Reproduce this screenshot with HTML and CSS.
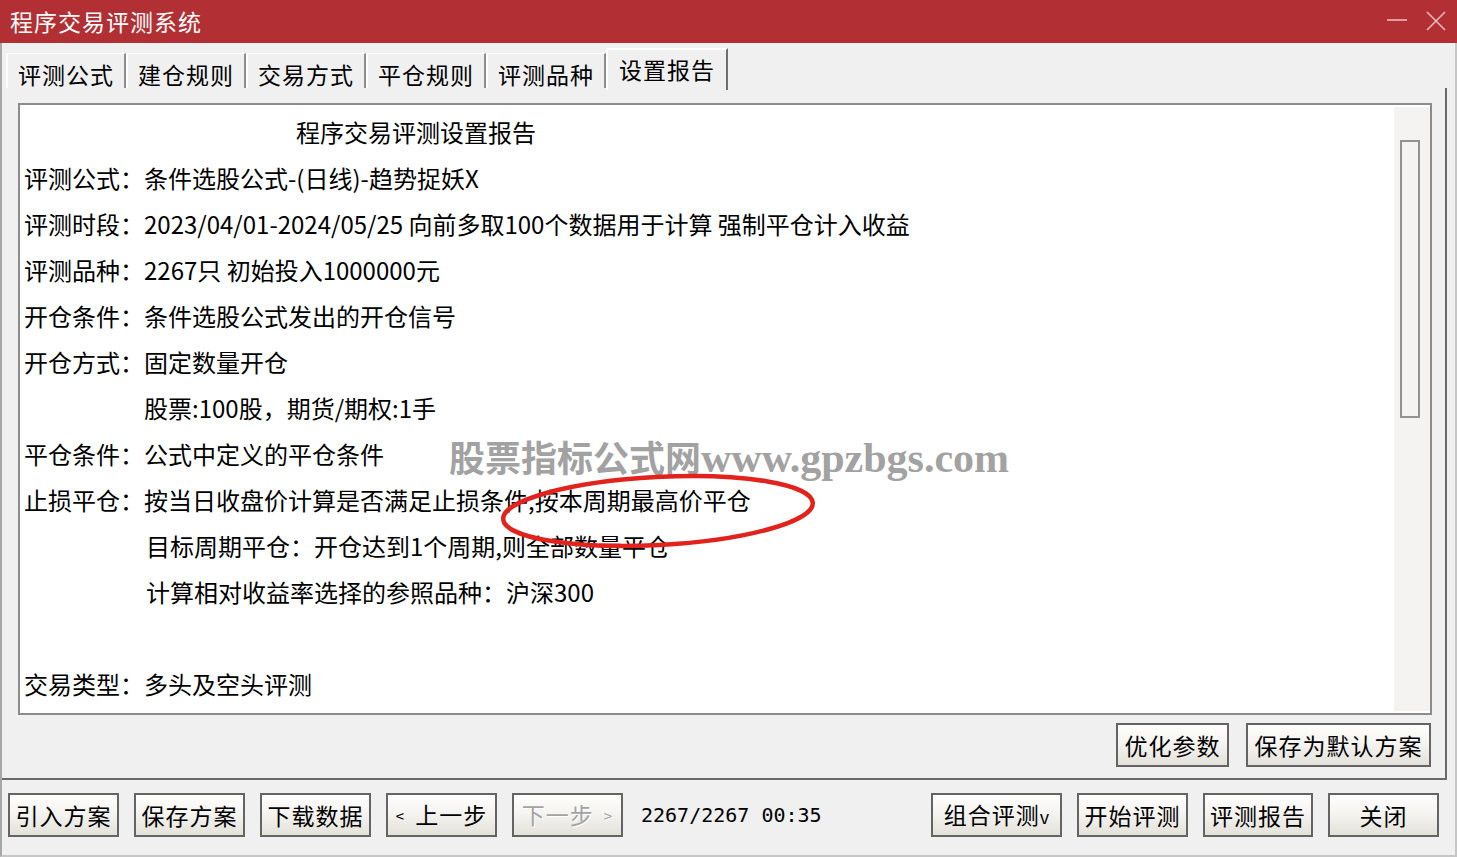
FILE: index.html
```html
<!DOCTYPE html>
<html lang="zh-CN">
<head>
<meta charset="utf-8">
<title>程序交易评测系统</title>
<link rel="stylesheet" href="styles.css">
</head>
<body>
<div class="window">
  <header class="titlebar">
    <span class="title">程序交易评测系统</span>
    <div class="controls">
      <svg class="ctl-min" width="22" height="6" viewBox="0 0 22 6"><line x1="1" y1="3" x2="21" y2="3" stroke="#f2c0c2" stroke-width="1.5"/></svg>
      <svg class="ctl-close" width="20" height="20" viewBox="0 0 20 20"><path d="M1 1 L19 19 M19 1 L1 19" stroke="#f2c0c2" stroke-width="1.5" fill="none"/></svg>
    </div>
  </header>
  <div class="body">
    <nav class="tabs">
      <div class="tab">评测公式</div>
      <div class="tab">建仓规则</div>
      <div class="tab">交易方式</div>
      <div class="tab">平仓规则</div>
      <div class="tab">评测品种</div>
      <div class="tab active">设置报告</div>
    </nav>
    <section class="page">
      <div class="report">
        <div class="report-text">
          <div class="line heading">程序交易评测设置报告</div>
          <div class="line"><span class="label">评测公式：</span>条件选股公式-(日线)-趋势捉妖X</div>
          <div class="line"><span class="label">评测时段：</span>2023/04/01-2024/05/25 向前多取100个数据用于计算 强制平仓计入收益</div>
          <div class="line"><span class="label">评测品种：</span>2267只 初始投入1000000元</div>
          <div class="line"><span class="label">开仓条件：</span>条件选股公式发出的开仓信号</div>
          <div class="line"><span class="label">开仓方式：</span>固定数量开仓</div>
          <div class="line indent">股票:100股，期货/期权:1手</div>
          <div class="line"><span class="label">平仓条件：</span>公式中定义的平仓条件</div>
          <div class="line"><span class="label">止损平仓：</span>按当日收盘价计算是否满足止损条件,按本周期最高价平仓</div>
          <div class="line indent2">目标周期平仓：开仓达到1个周期,则全部数量平仓</div>
          <div class="line indent2">计算相对收益率选择的参照品种：沪深300</div>
          <div class="line"></div>
          <div class="line"><span class="label">交易类型：</span>多头及空头评测</div>
        </div>
        <div class="scroll"><div class="thumb"></div></div>
        <div class="watermark">股票指标公式网<span class="wm-latin">www.gpzbgs.com</span></div>
        <svg class="mark" width="320" height="80" viewBox="0 0 320 80">
          <ellipse cx="161" cy="40" rx="155" ry="34" transform="rotate(-3 161 40)" fill="none" stroke="#e2221c" stroke-width="4.5"/>
        </svg>
      </div>
      <div class="page-actions">
        <button class="btn w113">优化参数</button>
        <button class="btn w185">保存为默认方案</button>
      </div>
    </section>
    <footer class="bottombar">
      <div class="group">
        <button class="btn">引入方案</button>
        <button class="btn">保存方案</button>
        <button class="btn">下载数据</button>
        <button class="btn"><span class="arrow">&lt;</span>上一步</button>
        <button class="btn disabled">下一步<span class="arrow r">&gt;</span></button>
        <span class="status">2267/2267 00:35</span>
      </div>
      <div class="group">
        <button class="btn w131">组合评测<span class="small-v">v</span></button>
        <button class="btn">开始评测</button>
        <button class="btn w110">评测报告</button>
        <button class="btn">关闭</button>
      </div>
    </footer>
  </div>
</div>
</body>
</html>
```

FILE: styles.css
```css
* { box-sizing: border-box; }
html, body { margin: 0; padding: 0; }
body {
  background: #f0f0f0;
  font-family: "Noto Sans CJK SC", "Noto Sans", sans-serif;
  color: #000;
}
.window {
  width: 1457px;
  height: 857px;
  display: flex;
  flex-direction: column;
  overflow: hidden;
}
.titlebar {
  height: 43px;
  flex: none;
  background: #b22f34;
  display: flex;
  align-items: center;
  padding: 0 10px 0 10px;
}
.title {
  color: #fff;
  font-size: 23px;
  line-height: 43px;
  letter-spacing: 1px;
}
.controls {
  margin-left: auto;
  display: flex;
  align-items: center;
  gap: 18px;
  padding-right: 1px;
}
.ctl-min { margin-top: -4px; }
.ctl-close { margin-top: -2px; }

.body {
  flex: 1;
  display: flex;
  flex-direction: column;
  border-left: 2px solid #a8a8a8;
  border-right: 2px solid #c6c6c6;
  border-bottom: 2px solid #c6c6c6;
}
.tabs {
  height: 45px;
  flex: none;
  display: flex;
  align-items: flex-end;
  padding-left: 4px;
}
.tab {
  width: 120px;
  height: 35px;
  font-size: 23px;
  letter-spacing: 1px;
  line-height: 36px;
  text-align: center;
  border-top: 1px solid #fcfcfc;
  border-left: 2px solid #fcfcfc;
  border-right: 2px solid #8e8e8e;
  padding-top: 2px;
}
.tab.active {
  width: 122px;
  height: 42px;
  margin-bottom: -2px;
  padding-top: 0;
  line-height: 38px;
  border-top: 2px solid #fcfcfc;
  border-right: 2px solid #6e6e6e;
  background: #f0f0f0;
  position: relative;
  z-index: 1;
}

.page {
  height: 692px;
  flex: none;
  margin-right: 8px;
  border-right: 2px solid #6a6a6a;
  border-bottom: 2px solid #6a6a6a;
  padding: 15px 13px 11px 16px;
  display: flex;
  flex-direction: column;
}
.report {
  height: 612px;
  flex: none;
  border: 2px solid #8c8c8c;
  background: #fff;
  display: flex;
  position: relative;
}
.report-text {
  flex: 1;
  padding: 4px 0 0 4px;
  font-size: 24px;
}
.line {
  height: 46px;
  line-height: 46px;
  white-space: nowrap;
}
.heading { padding-left: 272px; }
.indent { padding-left: 120px; }
.indent2 { padding-left: 122px; }
.scroll {
  width: 36px;
  margin: 2px 0;
  background: #f4f3f1;
  padding: 33px 0 0 6px;
}
.thumb {
  width: 20px;
  height: 278px;
  border: 2px solid #929292;
  background: #f4f3f1;
}
.watermark {
  position: absolute;
  left: 429px;
  top: 331px;
  line-height: 44px;
  font-family: "Liberation Serif", "Noto Sans CJK SC", serif;
  font-weight: bold;
  font-size: 36px;
  color: #a2a2a2;
  white-space: nowrap;
}
.wm-latin { font-size: 42px; }
.mark {
  position: absolute;
  left: 477px;
  top: 366px;
}

.page-actions {
  margin-top: 8px;
  display: flex;
  justify-content: flex-end;
  gap: 17px;
  padding-right: 1px;
}

.btn {
  width: 111px;
  height: 44px;
  padding: 0;
  border: 2px solid #646464;
  border-radius: 0;
  background: linear-gradient(#fefefe 0%, #f5f4f1 45%, #e4e1da 100%);
  font-family: "Noto Sans CJK SC", "Noto Sans", sans-serif;
  font-size: 23px;
  letter-spacing: 1px;
  color: #000;
  line-height: 38px;
  white-space: nowrap;
}
.w113 { width: 113px; }
.w185 { width: 185px; }
.w131 { width: 131px; }
.w110 { width: 110px; }
.btn.disabled {
  color: #a3a3a3;
  text-shadow: 1px 1px 0 #fff;
}
.arrow {
  font-size: 15px;
  margin-right: 10px;
  vertical-align: 2px;
}
.arrow.r { margin: 0 0 0 10px; }
.small-v { font-size: 18px; letter-spacing: 0; }

.bottombar {
  flex: 1;
  display: flex;
  justify-content: space-between;
  align-items: flex-start;
  padding: 13px 16px 0 6px;
}
.group {
  display: flex;
  align-items: center;
  gap: 15px;
}
.status {
  margin-left: 3px;
  font-family: "DejaVu Sans Mono", monospace;
  font-size: 20px;
  line-height: 44px;
}
```
